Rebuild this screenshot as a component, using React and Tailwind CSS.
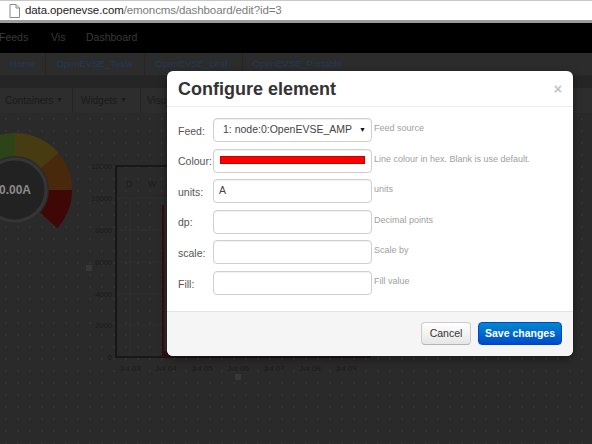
import React from 'react'

const font = "font-['Liberation_Sans',Arial,sans-serif]"

function PageIcon() {
  return (
    <svg width="11" height="14" viewBox="0 0 11 14" className="shrink-0">
      <path d="M1 0.5h6l3.5 3.5v9.5h-9.5z" fill="#fff" stroke="#8a8a8a" />
      <path d="M7 0.5v3.5h3.5" fill="none" stroke="#8a8a8a" />
    </svg>
  )
}

function UrlBar() {
  return (
    <div className="flex h-[23px] items-center gap-[5px] border-t border-[#c8c8c8] border-b-[3px] border-b-[#9c9c9c] bg-white pl-[9px]">
      <PageIcon />
      <span className="text-[11.5px] tracking-[-0.1px] leading-none">
        <span className="text-[#222]">data.openevse.com</span>
        <span className="text-[#7a7a7a]">/emoncms/dashboard/edit?id=3</span>
      </span>
    </div>
  )
}

function Menus() {
  return (
    <>
      <div className="flex h-[30px] items-center bg-black text-[10.5px] text-[#3a3a3a]">
        <span className="w-[52px] -ml-[1px]">Feeds</span>
        <span className="w-[35px]">Vis</span>
        <span>Dashboard</span>
      </div>
      <div className="flex h-[22px] items-stretch bg-[#2c2c2c] text-[9.5px] text-[#213a57]">
        <span className="flex items-center border-r border-[#262626] pl-[10px] pr-[10px]">Home</span>
        <span className="flex items-center border-r border-[#262626] px-[10px] pr-[12px]">OpenEVSE_Tesla</span>
        <span className="flex items-center border-r border-[#262626] px-[10px] pr-[14px]">OpenEVSE_Leaf</span>
        <span className="flex items-center px-[10px]">OpenEVSE_Portable</span>
      </div>
      <div className="h-[13px] bg-[#252525]" />
      <div className="flex h-[25px] items-stretch bg-[#2d2d2d] text-[10px] text-[#1a1a1a]">
        <span className="flex w-[73px] items-center gap-[3px] border-r border-[#252525] pl-[5px]">
          Containers <span className="text-[7px]">▼</span>
        </span>
        <span className="flex w-[68px] items-center gap-[3px] border-r border-[#252525] pl-[8px]">
          Widgets <span className="text-[7px]">▼</span>
        </span>
        <span className="flex w-[25px] items-center overflow-hidden whitespace-nowrap pl-[6px]">Visu</span>
      </div>
    </>
  )
}

function Canvas() {
  const yl = [
    ['12000', 166],
    ['10000', 198],
    ['8000', 230],
    ['6000', 262],
    ['4000', 294],
    ['2000', 325],
    ['0', 357],
  ]
  const xl = [130, 166, 202, 238, 274, 310, 346]
  const cx = 15
  const cy = 190
  const arc = (r1, r2, a1, a2) => {
    const p = (r, a) => [cx + r * Math.cos((a * Math.PI) / 180), cy - r * Math.sin((a * Math.PI) / 180)]
    const [x1, y1] = p(r2, a1)
    const [x2, y2] = p(r2, a2)
    const [x3, y3] = p(r1, a2)
    const [x4, y4] = p(r1, a1)
    return `M${x1} ${y1} A${r2} ${r2} 0 0 1 ${x2} ${y2} L${x3} ${y3} A${r1} ${r1} 0 0 0 ${x4} ${y4}Z`
  }
  return (
    <div className="relative flex-1 bg-[#2a2a2a] bg-[radial-gradient(#323232_1px,transparent_1.3px)] bg-[length:12px_12px]">
      <svg className="absolute inset-0" width="592" height="331" viewBox="0 113 592 331">
        <path d={arc(34, 57, 150, 90)} fill="#2d4318" />
        <path d={arc(34, 57, 90, 40)} fill="#473b12" />
        <path d={arc(34, 57, 40, 0)} fill="#4a280c" />
        <path d={arc(34, 57, 0, -42)} fill="#400707" />
        <circle cx={cx} cy={cy} r="31" fill="#222" stroke="#353535" strokeWidth="3" />
        <text x="15" y="194" textAnchor="middle" fontFamily="Liberation Sans, Arial, sans-serif" fontWeight="bold" fontSize="12" fill="#8a8a8a">
          0.00A
        </text>

        {yl.map(([t, y]) => (
          <g key={t}>
            <line x1="116" x2="370" y1={y} y2={y} stroke="#303030" strokeWidth="0.8" />
            <text x="112" y={y + 3} textAnchor="end" fontFamily="Liberation Sans, Arial, sans-serif" fontSize="7.5" fill="#1b1b1b">
              {t}
            </text>
          </g>
        ))}
        {xl.map((x, i) => (
          <g key={x}>
            <line x1={x} x2={x} y1="196" y2="357" stroke="#303030" strokeWidth="0.8" />
            <text x={x} y="371" textAnchor="middle" fontFamily="Liberation Sans, Arial, sans-serif" fontSize="8" fill="#1b1b1b">
              {'Jul 0' + (i + 3)}
            </text>
          </g>
        ))}
        <rect x="116" y="166" width="254" height="191" fill="none" stroke="#121212" strokeWidth="1.5" />
        <line x1="116" x2="370" y1="196" y2="196" stroke="#262626" />
        <text x="126" y="187" fontFamily="Liberation Sans, Arial, sans-serif" fontSize="9" fill="#1c1c1c">D</text>
        <text x="148" y="187" fontFamily="Liberation Sans, Arial, sans-serif" fontSize="9" fill="#1c1c1c">W</text>
        <line x1="163" x2="163" y1="205" y2="357" stroke="#3c0a0a" strokeWidth="2" />
        <rect x="163" y="351" width="207" height="6" fill="#2c1414" />
        <rect x="86" y="265" width="6" height="6" fill="#383838" />
        <rect x="235" y="374" width="6" height="6" fill="#383838" />
      </svg>
    </div>
  )
}

function Field({ label, help, children }) {
  return (
    <div className="flex h-[24px] items-stretch">
      <label className="flex w-[35px] items-center pt-[3px] text-[10.5px] text-[#555]">{label}</label>
      <div className="flex h-[24px] w-[159px] items-center rounded-[4px] border border-[#cfcfcf] bg-white shadow-[inset_0_1px_1px_rgba(0,0,0,0.06)]">
        {children}
      </div>
      <span className="ml-[2px] pt-[5px] text-[9px] leading-[10px] text-[#a0a0a0]">{help}</span>
    </div>
  )
}

function Modal() {
  return (
    <div className="absolute left-[167px] top-[71px] w-[406px] rounded-[6px] bg-white shadow-[0_3px_8px_rgba(0,0,0,0.4)]">
      <div className="flex h-[36px] items-center justify-between border-b border-[#ececec] pl-[11px] pr-[11px]">
        <h3 className="text-[18px] font-bold leading-none text-[#333]">Configure element</h3>
        <span className="text-[14px] font-bold leading-none text-[#c4c4c4]">×</span>
      </div>
      <div className="flex flex-col gap-[6.6px] pb-[16px] pl-[11px] pt-[11px]">
        <Field label="Feed:" help="Feed source">
          <span className="flex-1 pl-[9px] text-[10.5px] text-[#444]">1: node:0:OpenEVSE_AMP</span>
          <span className="pr-[5px] text-[7px] text-[#111]">▼</span>
        </Field>
        <Field label="Colour:" help="Line colour in hex. Blank is use default.">
          <div className="mx-[6px] mb-[2px] h-[8px] flex-1 border border-[#c00] bg-[#f00]" />
        </Field>
        <Field label="units:" help="units">
          <span className="pl-[5px] text-[10.5px] text-[#444]">A</span>
        </Field>
        <Field label="dp:" help="Decimal points" />
        <Field label="scale:" help="Scale by" />
        <Field label="Fill:" help="Fill value" />
      </div>
      <div className="flex h-[45px] items-center justify-end gap-[7px] rounded-b-[6px] border-t border-[#e2e2e2] bg-[#f5f5f5] pr-[11px]">
        <button className="h-[23px] w-[50px] rounded-[4px] border border-[#ccc] border-b-[#b3b3b3] bg-linear-to-b from-white to-[#e6e6e6] text-[10.5px] text-[#333]">
          Cancel
        </button>
        <button className="h-[23px] w-[84px] rounded-[4px] border border-[#0044cc] bg-linear-to-b from-[#0088cc] to-[#0048cc] text-[10.5px] font-bold text-white">
          Save changes
        </button>
      </div>
    </div>
  )
}

export default function App() {
  return (
    <div className={`relative flex h-[444px] w-[592px] flex-col overflow-hidden bg-[#2a2a2a] ${font}`}>
      <UrlBar />
      <Menus />
      <Canvas />
      <Modal />
    </div>
  )
}
